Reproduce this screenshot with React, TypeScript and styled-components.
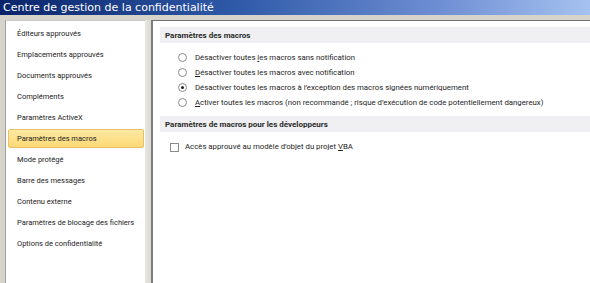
import React from "react";
import styled, { createGlobalStyle } from "styled-components";

const Global = createGlobalStyle`
  html, body { margin: 0; padding: 0; background: #d4d0c8; }
  body { font-family: Roboto, "Open Sans", sans-serif; }
`;

const Window = styled.div`
  width: 590px;
  height: 283px;
  background: #d6d3cb;
  display: flex;
  flex-direction: column;
  overflow: hidden;
`;

const TitleBar = styled.div`
  height: 15px;
  flex: none;
  background: linear-gradient(90deg, #0a246a 0%, #2f5aa8 40%, #6f8fd4 75%, #a6c2f0 100%);
  color: #fff;
  font-family: "DejaVu Sans", sans-serif;
  font-size: 11px;
  line-height: 15px;
  padding-left: 3px;
  white-space: nowrap;
`;

const Body = styled.div`
  flex: 1;
  display: flex;
  padding: 5px 0 0 5px;
  min-height: 0;
`;

const Sidebar = styled.div`
  width: 136px;
  flex: none;
  background: #fff;
  border-left: 1px solid #a0a0a0;
  border-top: 1px solid #c8c8c8;
  padding: 3px 1px 0 2px;
  display: flex;
  flex-direction: column;
`;

const NavItem = styled.div<{ $active?: boolean }>`
  height: 19px;
  margin-bottom: 2px;
  display: flex;
  align-items: center;
  padding-left: 8px;
  font-size: 7.5px;
  color: #222;
  white-space: nowrap;
  box-sizing: border-box;
  border: 1px solid ${(p) => (p.$active ? "#e8c166" : "transparent")};
  background: ${(p) => (p.$active ? "linear-gradient(#fde9a3, #fcd975)" : "transparent")};
  border-radius: 2px;
`;

const Gutter = styled.div`
  width: 6px;
  flex: none;
  background: linear-gradient(90deg, #e8e6e0, #dcd9d1);
`;

const Content = styled.div`
  flex: 1;
  background: #fff;
  border-left: 2px solid #7c7c7c;
  border-top: 1px solid #707070;
  padding: 6px 0 0 7px;
  display: flex;
  flex-direction: column;
`;

const SectionHeader = styled.div`
  height: 16px;
  background: #f0f0f2;
  font-weight: 700;
  font-size: 8px;
  color: #2a2a2a;
  display: flex;
  align-items: center;
  padding-left: 5px;
  white-space: nowrap;
`;

const OptionList = styled.div<{ $indent: number }>`
  display: flex;
  flex-direction: column;
  padding: 8px 0 7px ${(p) => p.$indent}px;
  gap: 2px;
`;

const Option = styled.label`
  display: flex;
  align-items: center;
  height: 13px;
  font-size: 7.8px;
  color: #1e1e1e;
  white-space: nowrap;
`;

const Text = styled.span``;

const Radio = styled.span<{ $checked?: boolean }>`
  width: 7px;
  height: 7px;
  border-radius: 50%;
  border: 1px solid #8a8a8a;
  background: #fff;
  margin-right: 8px;
  position: relative;
  flex: none;
  &::after {
    content: "";
    display: ${(p) => (p.$checked ? "block" : "none")};
    position: absolute;
    left: 2px;
    top: 2px;
    width: 3px;
    height: 3px;
    border-radius: 50%;
    background: #222;
  }
`;

const Check = styled.span`
  width: 7px;
  height: 7px;
  border: 1px solid #8a8a8a;
  background: #fff;
  margin-right: 6px;
  margin-top: 1px;
  flex: none;
`;

const U = styled.span`
  text-decoration: underline;
`;

const navItems = [
  "Éditeurs approuvés",
  "Emplacements approuvés",
  "Documents approuvés",
  "Compléments",
  "Paramètres ActiveX",
  "Paramètres des macros",
  "Mode protégé",
  "Barre des messages",
  "Contenu externe",
  "Paramètres de blocage des fichiers",
  "Options de confidentialité",
];

export default function App() {
  return (
    <>
      <Global />
      <Window>
        <TitleBar>Centre de gestion de la confidentialité</TitleBar>
        <Body>
          <Sidebar>
            {navItems.map((t, i) => (
              <NavItem key={t} $active={i === 5}>
                {t}
              </NavItem>
            ))}
          </Sidebar>
          <Gutter />
          <Content>
            <SectionHeader>Paramètres des macros</SectionHeader>
            <OptionList $indent={18}>
              <Option>
                <Radio />
                <Text>
                  Désactiver toutes <U>l</U>es macros sans notification
                </Text>
              </Option>
              <Option>
                <Radio />
                <Text>
                  <U>D</U>ésactiver toutes les macros avec notification
                </Text>
              </Option>
              <Option>
                <Radio $checked />
                <Text>Désactiver toutes les macros à l’exception des macros signées numériquement</Text>
              </Option>
              <Option>
                <Radio />
                <Text>
                  <U>A</U>ctiver toutes les macros (non recommandé ; risque d’exécution de code potentiellement dangereux)
                </Text>
              </Option>
            </OptionList>
            <SectionHeader>Paramètres de macros pour les développeurs</SectionHeader>
            <OptionList $indent={10}>
              <Option>
                <Check />
                <Text>
                  Accès approuvé au modèle d’objet du projet <U>V</U>BA
                </Text>
              </Option>
            </OptionList>
          </Content>
        </Body>
      </Window>
    </>
  );
}
